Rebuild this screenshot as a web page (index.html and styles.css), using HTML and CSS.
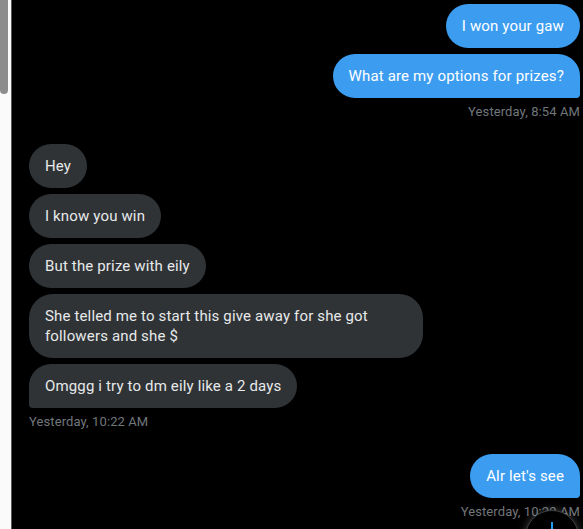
FILE: index.html
```html
<html>
<head>
    <link rel="stylesheet" href="styles.css">
</head>

<body>

<div class="sidebar">
    <div class="thumb"></div>
</div>

<div class="chat">
    <div class="row sent">
        <div class="bubble">I won your gaw</div>
    </div>
    <div class="row sent">
        <div class="bubble last">What are my options for prizes?</div>
    </div>
    <div class="time sent">Yesterday, 8:54 AM</div>

    <div class="row received">
        <div class="bubble">Hey</div>
    </div>
    <div class="row received">
        <div class="bubble">I know you win</div>
    </div>
    <div class="row received">
        <div class="bubble">But the prize with eily</div>
    </div>
    <div class="row received">
        <div class="bubble">She telled me to start this give away for she got followers and she $</div>
    </div>
    <div class="row received">
        <div class="bubble last">Omggg i try to dm eily like a 2 days</div>
    </div>
    <div class="time">Yesterday, 10:22 AM</div>

    <div class="row sent">
        <div class="bubble last">Alr let's see</div>
    </div>
    <div class="time sent">Yesterday, 10:22 AM</div>

    <!-- scroll to newest button, sits over the last timestamp -->
    <div class="scroll-down">
        <svg viewBox="0 0 20 20" width="20" height="20">
            <path d="M10 1v18M3 10l7 7 7-7" fill="none" stroke="#1d9bf0" stroke-width="2"/>
        </svg>
    </div>
</div>

</body>
</html>
```

FILE: styles.css
```css
body {
    font-family: Roboto, Arial, sans-serif;
    background-color: #000;
    margin: 0;
    padding: 0;
    display: flex;
    height: 529px;
    overflow: hidden;
}

.sidebar {
    width: 11px;
    background-color: #fafafa;
    border-right: 1px solid #5a5a5a;
    flex-shrink: 0;
}

.sidebar .thumb {
    width: 8px;
    height: 94px;
    background-color: #8c8c8c;
    border-radius: 0 0 4px 4px;
}

.chat {
    flex: 1;
    position: relative;
    padding: 4px 3px 0 17px;
}

.row {
    display: flex;
    margin-bottom: 6px;
}

.row.sent {
    justify-content: flex-end;
}

.bubble {
    max-width: 362px;
    padding: 12px 16px;
    font-size: 15px;
    line-height: 20px;
    letter-spacing: 0.15px;
    border-radius: 24px;
}

.sent .bubble {
    background-color: #3c9df0;
    color: #fff;
}

.sent .bubble.last {
    border-bottom-right-radius: 4px;
}

.received .bubble {
    background-color: #2f3336;
    color: #e7e9ea;
}

.received .bubble.last {
    border-bottom-left-radius: 4px;
}

.time {
    font-size: 13px;
    line-height: 16px;
    letter-spacing: 0.1px;
    color: #71767b;
    margin-bottom: 24px;
}

.time.sent {
    text-align: right;
}

.scroll-down {
    position: absolute;
    left: 513px;
    top: 510px;
    width: 54px;
    height: 54px;
    border-radius: 50%;
    background-color: #000;
    border: 1px solid #3e4144;
    box-shadow: 0 0 8px rgba(255, 255, 255, 0.25);
    display: flex;
    align-items: flex-start;
    justify-content: center;
    padding-top: 10px;
    box-sizing: border-box;
}
```
